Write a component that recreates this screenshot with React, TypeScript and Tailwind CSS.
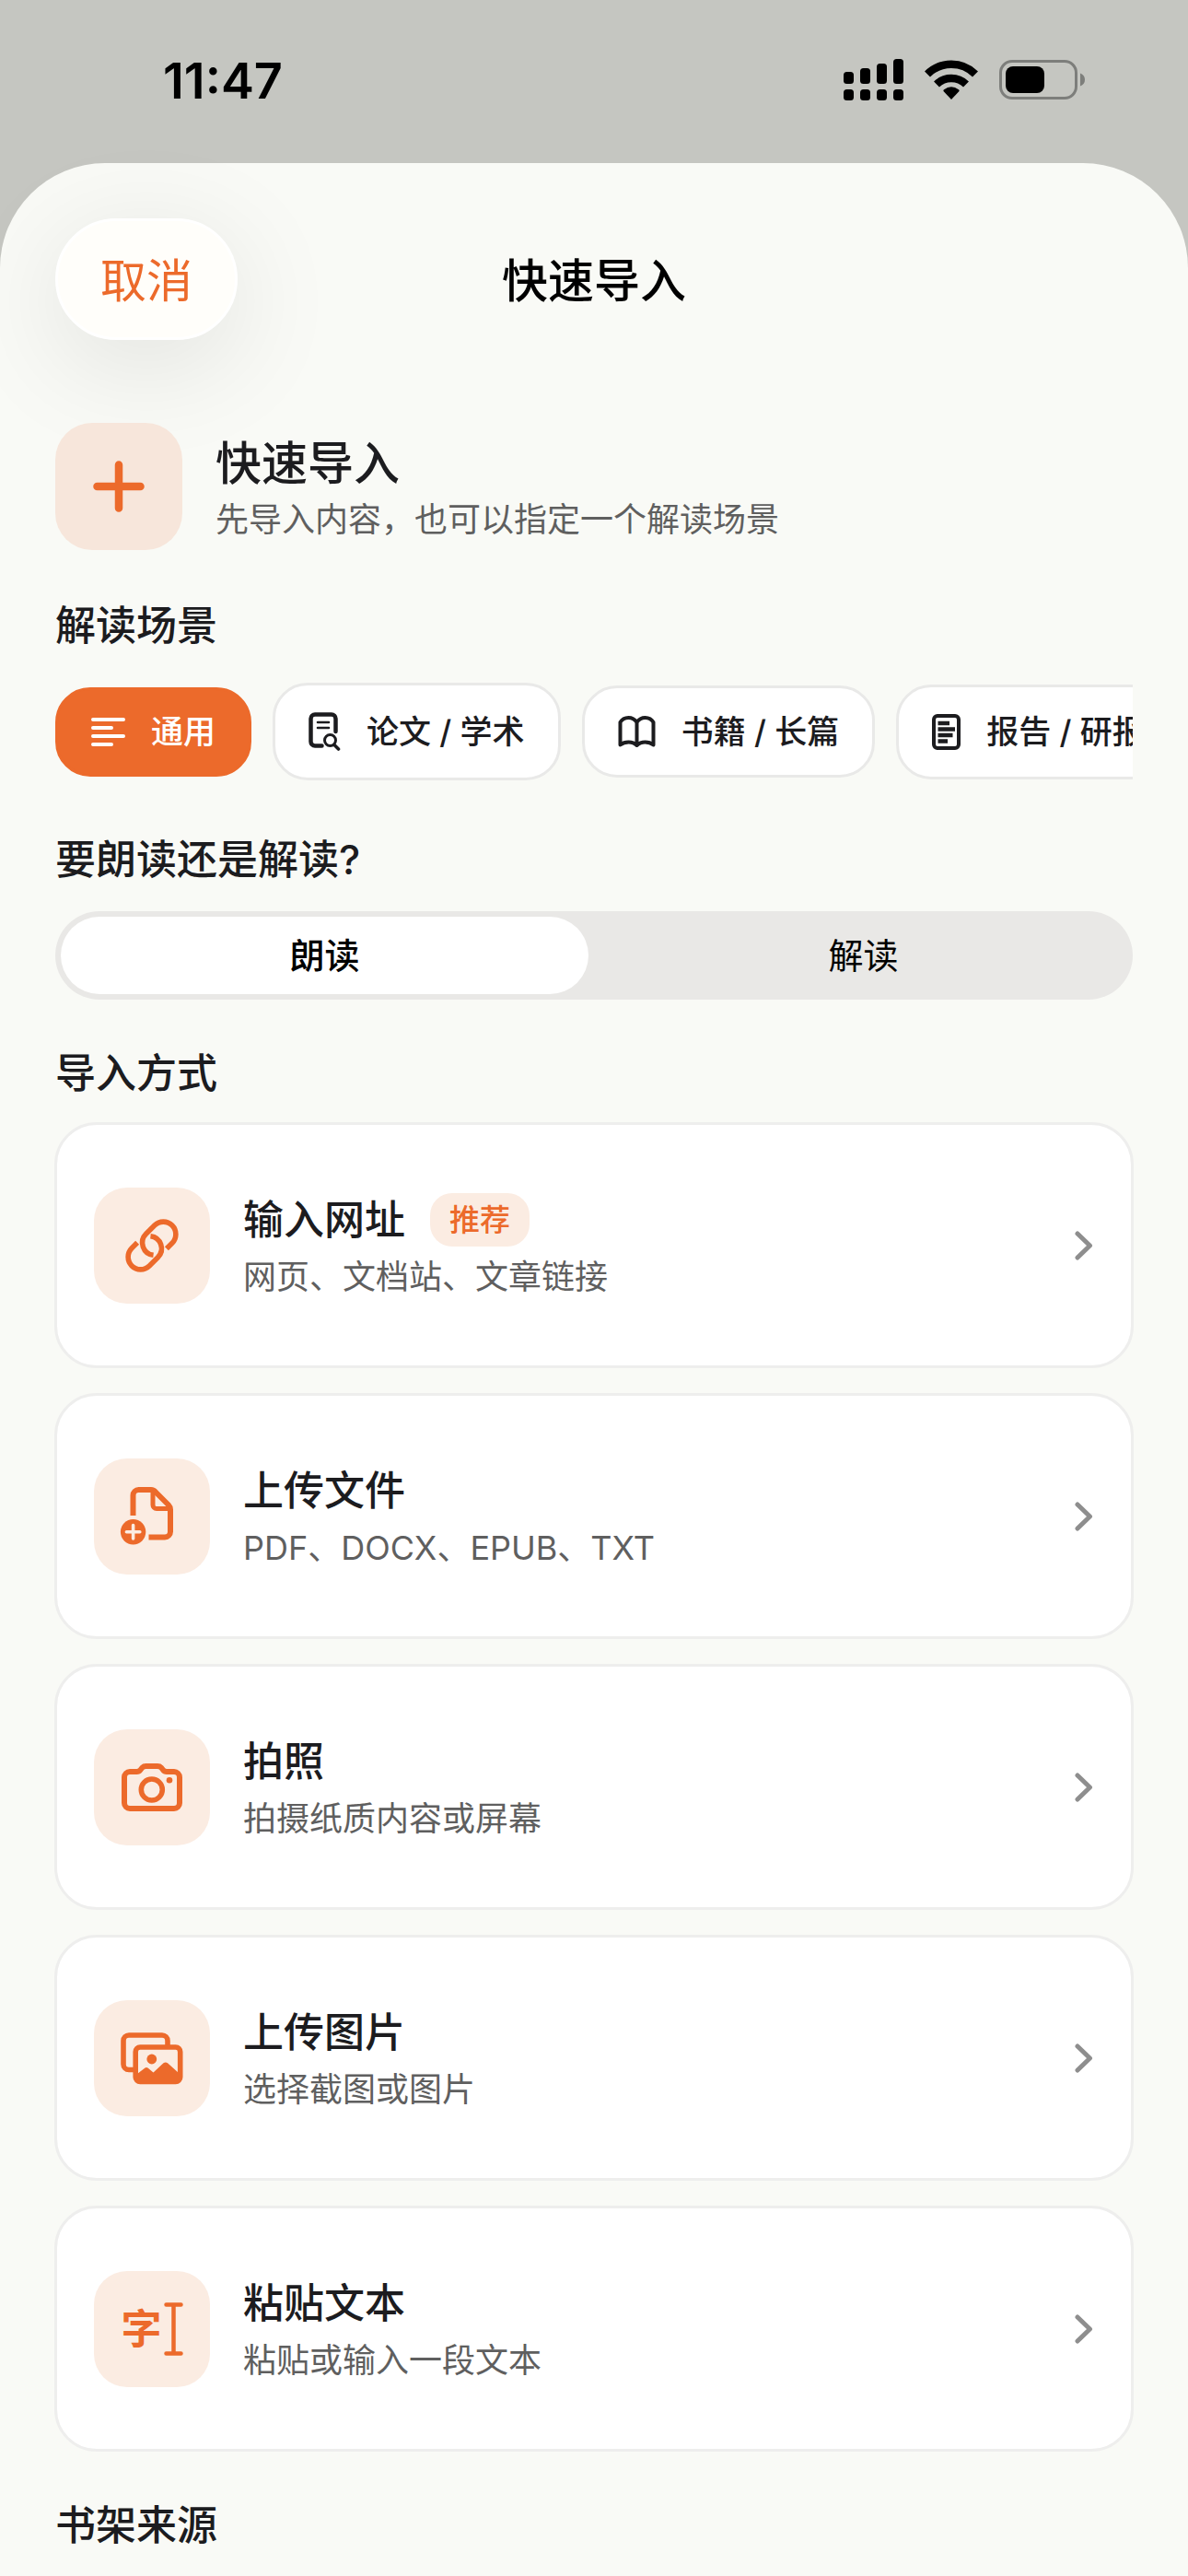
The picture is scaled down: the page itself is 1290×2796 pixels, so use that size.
import React, { useState } from 'react';

interface Scene {
  id: string;
  label: string;
  icon: React.ReactNode;
}

interface ImportMethod {
  id: string;
  title: string;
  description: string;
  badge?: string;
  icon: React.ReactNode;
}

const LinesIcon = () => (
  <svg className="h-[33px] w-[37px]" viewBox="0 0 37 33" fill="none" stroke="currentColor" strokeWidth="4" strokeLinecap="round">
    <path d="M2 3H35M2 12H22M2 21H35M2 30H22" />
  </svg>
);

const PaperSearchIcon = () => (
  <svg className="h-[42px] w-[35px]" viewBox="0 0 35 42" fill="none" stroke="currentColor" strokeLinecap="round">
    <path d="M14.500 36.500H7a4.500 4.500 0 0 1-4.500-4.500V7A4.500 4.500 0 0 1 7 2.500H25A4.500 4.500 0 0 1 29.500 7V21" strokeWidth="4.500" />
    <path d="M10 11H22M10 17H22" strokeWidth="2.600" />
    <circle cx="23.500" cy="30.500" r="6" strokeWidth="3" />
    <path d="M28 35.500L32.500 40" strokeWidth="3.600" />
  </svg>
);

const BookIcon = () => (
  <svg className="h-[36px] w-[41px]" viewBox="0 0 41 36" fill="none" stroke="currentColor" strokeWidth="4" strokeLinejoin="round">
    <path d="M20.500 8C18 4.500 15 3 11.500 3S4.500 4.500 2.500 8V32.500C5 30.500 8 29.500 11.500 29.500S18 30.500 20.500 33C23 30.500 26 29.500 29.500 29.500S36 30.500 38.500 32.500V8C36.500 4.500 33 3 29.500 3S23 4.500 20.500 8ZV33" />
  </svg>
);

const ReportIcon = () => (
  <svg className="h-[39px] w-[31px]" viewBox="0 0 31 39" fill="none" stroke="currentColor" strokeWidth="4">
    <rect x="2" y="2" width="27" height="35" rx="4" />
    <path d="M6.500 10H19M6.500 16.500H25M6.500 23H22.500M6.500 29.500H17" strokeWidth="4.400" />
  </svg>
);

const LinkIcon = () => (
  <svg className="size-full" viewBox="-63 -63 126 126" fill="none" stroke="currentColor" strokeWidth="5.600">
    <g transform="rotate(-45)">
      <path d="M9 13.500H17.500A13.500 13.500 0 0 0 17.500 -13.500H4.400A13.500 13.500 0 0 0 -6.200 8.400" />
      <path d="M-9 -13.500H-17.500A13.500 13.500 0 0 0 -17.500 13.500H-4.400A13.500 13.500 0 0 0 6.200 -8.400" />
    </g>
  </svg>
);

const FileIcon = () => (
  <svg className="size-full" viewBox="0 0 126 126" fill="none" stroke="currentColor" strokeWidth="6" strokeLinejoin="round">
    <path d="M42.500 62V40A6 6 0 0 1 48.500 34H62Q65 34 67 36.500L81 50.500Q83 52.500 83 55.500V79.500A6 6 0 0 1 77 85.500H59.500" />
    <path d="M64 35V50.500A4 4 0 0 0 68 54.500H82" strokeWidth="5" />
    <circle cx="42.600" cy="79.700" r="13.700" fill="currentColor" stroke="none" />
    <path d="M42.600 72.500V87M35.400 79.700H49.800" className="stroke-[#fbece2]" strokeWidth="3.600" strokeLinecap="round" />
  </svg>
);

const CameraIcon = () => (
  <svg className="size-full" viewBox="0 0 126 126" fill="none" stroke="currentColor" strokeWidth="6" strokeLinejoin="round">
    <path d="M39 46H46.500Q49 46 50.500 44L52.500 41.500Q54 40 56.500 40H69Q71.500 40 73 41.500L75 44Q76.500 46 79 46H87A6 6 0 0 1 93 52V80A6 6 0 0 1 87 86H39A6 6 0 0 1 33 80V52A6 6 0 0 1 39 46Z" />
    <circle cx="62.800" cy="65.500" r="11.500" strokeWidth="5.600" />
    <circle cx="82" cy="55.300" r="3.300" fill="currentColor" stroke="none" />
  </svg>
);

const PhotosIcon = () => (
  <svg className="size-full" viewBox="0 0 126 126" fill="none" stroke="currentColor" strokeWidth="5.600" strokeLinejoin="round">
    <path d="M43 75.500H38A6 6 0 0 1 32 69.500V44A6 6 0 0 1 38 38H74A6 6 0 0 1 80 44V49" />
    <rect x="45.200" y="51" width="48.500" height="37.500" rx="5" />
    <circle cx="62.800" cy="64" r="5.400" fill="currentColor" stroke="none" />
    <path d="M47 80L55.500 73.500Q57 72.500 58.500 73.500L64.500 78.500L75.500 68.300Q77.700 66.500 80 68.300L92 79V88H47Z" fill="currentColor" stroke="none" />
  </svg>
);

const TextCursorIcon = () => (
  <span className="flex items-center gap-[2px]">
    <span className="text-[44px] leading-[60px] font-bold">字</span>
    <svg className="h-[58px] w-[21px]" viewBox="0 0 21 58" fill="none" stroke="currentColor" strokeWidth="4.500" strokeLinecap="round">
      <path d="M2.500 2.500H18.500M2.500 55.500H18.500M10.500 2.500V55.500" />
    </svg>
  </span>
);

const scenes: Scene[] = [
  { id: 'general', label: '通用', icon: <LinesIcon /> },
  { id: 'paper', label: '论文 / 学术', icon: <PaperSearchIcon /> },
  { id: 'book', label: '书籍 / 长篇', icon: <BookIcon /> },
  { id: 'report', label: '报告 / 研报', icon: <ReportIcon /> },
];

const modes = [
  { id: 'read', label: '朗读' },
  { id: 'explain', label: '解读' },
];

const methods: ImportMethod[] = [
  { id: 'url', title: '输入网址', description: '网页、文档站、文章链接', badge: '推荐', icon: <LinkIcon /> },
  { id: 'file', title: '上传文件', description: 'PDF、DOCX、EPUB、TXT', icon: <FileIcon /> },
  { id: 'camera', title: '拍照', description: '拍摄纸质内容或屏幕', icon: <CameraIcon /> },
  { id: 'photos', title: '上传图片', description: '选择截图或图片', icon: <PhotosIcon /> },
  { id: 'paste', title: '粘贴文本', description: '粘贴或输入一段文本', icon: <TextCursorIcon /> },
];

const StatusBar = () => (
  <div className="flex h-[177px] items-start justify-between pt-[58px] pr-[111px] pl-[177px] text-black">
    <span className="text-[54px] leading-[60px] font-semibold">11:47</span>
    <div className="flex items-center gap-[23px] pt-[6px]">
      <svg className="h-[46px] w-[65px]" viewBox="0 0 65 46" fill="currentColor">
        <rect x="0" y="14" width="11" height="13" rx="3.500" />
        <rect x="18" y="10" width="11" height="17" rx="3.500" />
        <rect x="36" y="5" width="11" height="22" rx="3.500" />
        <rect x="54" y="0" width="11" height="27" rx="3.500" />
        <rect x="0" y="33" width="11" height="12" rx="3.500" />
        <rect x="18" y="33" width="11" height="12" rx="3.500" />
        <rect x="36" y="33" width="11" height="12" rx="3.500" />
        <rect x="54" y="33" width="11" height="12" rx="3.500" />
      </svg>
      <svg className="h-[44px] w-[58px]" viewBox="0 0 58 44" fill="none" stroke="currentColor" strokeWidth="8.500">
        <path d="M3 15.500A37 37 0 0 1 55 15.500" />
        <path d="M13 26.500A23 23 0 0 1 45 26.500" />
        <path d="M29 43L20.500 34Q20 33 21 32.200Q29 26.500 37 32.200Q38 33 37.500 34Z" fill="currentColor" stroke="none" />
      </svg>
      <svg className="h-[44px] w-[94px]" viewBox="0 0 94 44">
        <rect x="1.500" y="1.500" width="82" height="40" rx="12.500" fill="none" stroke="#7d7e7b" strokeWidth="3" />
        <rect x="7" y="7" width="42" height="29" rx="8" fill="currentColor" />
        <path d="M88 14.500Q93 16.500 93 21.500T88 28.500Z" fill="#7d7e7b" />
      </svg>
    </div>
  </div>
);

const SectionTitle: React.FC<{ children: React.ReactNode }> = ({ children }) => (
  <h3 className="pt-[2px] text-[44px] leading-[60px] font-medium">{children}</h3>
);

const MethodCard: React.FC<{ method: ImportMethod }> = ({ method }) => (
  <button
    type="button"
    className="flex h-[267px] w-full items-center rounded-[46px] border-3 border-[#eeeeed] bg-white pr-[41px] pl-10 text-left"
  >
    <span className="flex size-[126px] shrink-0 items-center justify-center rounded-[36px] bg-[#fbece2] text-[#ec6a2b]">
      {method.icon}
    </span>
    <span className="ml-9 flex min-w-0 flex-1 flex-col gap-[6px] pt-1">
      <span className="flex h-[58px] items-center gap-[27px]">
        <span className="text-[44px] leading-[58px] font-medium">{method.title}</span>
        {method.badge && (
          <span className="rounded-[24px] bg-[#fbece2] px-[21px] text-[33px] leading-[58px] font-medium text-[#ec6a2b]">
            {method.badge}
          </span>
        )}
      </span>
      <span className="text-[36px] leading-[54px] text-[#5f5f5f]">{method.description}</span>
    </span>
    <svg className="h-[32px] w-[20px]" viewBox="0 0 20 32" fill="none" stroke="#8e8e8e" strokeWidth="5" strokeLinecap="round" strokeLinejoin="round">
      <path d="M3 3L16.500 16L3 29" />
    </svg>
  </button>
);

export default function App() {
  const [scene, setScene] = useState('general');
  const [mode, setMode] = useState('read');

  return (
    <div className="flex min-h-screen flex-col overflow-hidden bg-[#c5c6c1] font-[Inter,'Noto_Sans_CJK_SC',sans-serif] text-[#1c1c1f]">
      <StatusBar />

      <main className="flex-1 rounded-t-[114px] bg-[#f9faf6] px-[60px] pt-[60px]">
        <header className="grid grid-cols-[1fr_auto_1fr] items-center">
          <button
            type="button"
            className="h-[132px] justify-self-start rounded-full border-3 border-white bg-[#fffefa] px-[46px] pt-1 text-[50px] leading-[60px] text-[#ec6a2b] shadow-[0_24px_120px_rgba(0,0,0,0.1)]"
          >
            取消
          </button>
          <h1 className="pt-1 text-[50px] leading-[60px] font-medium text-black">快速导入</h1>
        </header>

        <div className="mt-[90px] flex items-center gap-9">
          <div className="flex size-[138px] items-center justify-center rounded-[40px] bg-[#f7e6db]">
            <svg className="size-[56px]" viewBox="0 0 56 56" stroke="#ec6a2b" strokeWidth="8.500" strokeLinecap="round">
              <path d="M28 4.500V51.500M4.500 28H51.500" />
            </svg>
          </div>
          <div className="flex flex-col gap-1 pt-2">
            <h2 className="text-[50px] leading-[60px] font-medium">快速导入</h2>
            <p className="text-[36px] leading-[54px] text-[#5f5f5f]">先导入内容，也可以指定一个解读场景</p>
          </div>
        </div>

        <section className="mt-[50px]">
          <SectionTitle>解读场景</SectionTitle>
          <div className="mt-8 flex items-center gap-[23px] overflow-x-auto [scrollbar-width:none]">
            {scenes.map((item) => (
              <button
                key={item.id}
                type="button"
                aria-pressed={scene === item.id}
                onClick={() => setScene(item.id)}
                className={`flex shrink-0 items-center gap-7 rounded-[38px] border-3 px-9 py-[29px] text-[35px] leading-[33px] font-medium ${
                  scene === item.id
                    ? 'border-[#ec6a2b] bg-[#ec6a2b] text-white'
                    : 'border-[#e9e9e8] bg-white'
                }`}
              >
                {item.icon}
                {item.label}
              </button>
            ))}
          </div>
        </section>

        <fieldset className="mt-[54px]">
          <legend>
            <SectionTitle>要朗读还是解读?</SectionTitle>
          </legend>
          <div className="mt-[26px] grid grid-cols-2 gap-3 rounded-full bg-[#e9e8e6] p-[6px]">
            {modes.map((item) => (
              <label
                key={item.id}
                className="flex h-[84px] items-center justify-center rounded-full text-[38px] leading-[54px] text-black has-checked:bg-white has-checked:font-medium"
              >
                <input
                  type="radio"
                  name="mode"
                  value={item.id}
                  checked={mode === item.id}
                  onChange={() => setMode(item.id)}
                  className="sr-only"
                />
                {item.label}
              </label>
            ))}
          </div>
        </fieldset>

        <section className="mt-12">
          <SectionTitle>导入方式</SectionTitle>
          <div className="-mx-px mt-[23px] flex flex-col gap-[27px]">
            {methods.map((method) => (
              <MethodCard key={method.id} method={method} />
            ))}
          </div>
        </section>

        <section className="mt-12 pb-5">
          <SectionTitle>书架来源</SectionTitle>
        </section>
      </main>
    </div>
  );
}
